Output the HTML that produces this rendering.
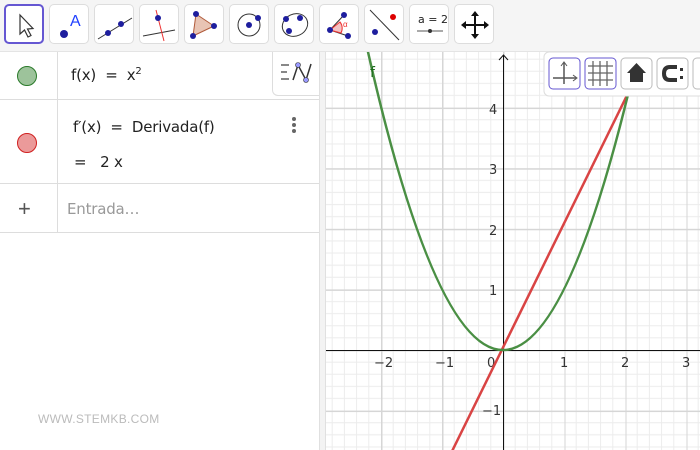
<!DOCTYPE html>
<html><head><meta charset="utf-8"><style>
*{margin:0;padding:0;box-sizing:border-box}
body{width:700px;height:450px;overflow:hidden;background:#fff;font-family:"Liberation Sans","DejaVu Sans",sans-serif;position:relative}
.tb{position:absolute;left:0;top:0;width:700px;height:52px;background:#f5f5f5;border-bottom:1px solid #e4e4e4}
.btn{position:absolute;top:4px;width:40px;height:40px;background:#fff;border:1px solid #ddd;border-radius:5px}
.btn.sel{border:2px solid #6557d2}
.btn svg{position:absolute;left:0;top:0}
.alg{position:absolute;left:0;top:52px;width:319px;height:398px;background:#fff}
.div{position:absolute;left:319px;top:52px;width:7px;height:398px;background:#f3f3f3;border-left:1px solid #e0e0e0;border-right:1px solid #e0e0e0}
.row{position:absolute;left:0;width:319px;border-bottom:1px solid #ddd}
.vl{position:absolute;left:57px;top:52px;width:1px;height:181px;background:#ddd}
.dot{position:absolute;left:17px;width:20px;height:20px;border-radius:50%}
.t{position:absolute;font-size:15px;color:#222;font-family:"DejaVu Sans","Liberation Sans",sans-serif;letter-spacing:-0.2px}
</style></head><body>
<div class="tb">
<div class="btn sel" style="left:4px"><svg width="40" height="40"><path d="M14 9 L14 28 L18.5 24 L22 31 L25 29.5 L21.5 23 L27 22.5 Z" fill="#fff" stroke="#333" stroke-width="1.2"/></svg></div>
<div class="btn" style="left:49px"><svg width="40" height="40"><circle cx="14" cy="29" r="4" fill="#1e1e9e"/><text x="20" y="21" font-size="16" fill="#1f3fff" font-family="Liberation Sans">A</text></svg></div>
<div class="btn" style="left:94px"><svg width="40" height="40"><line x1="3" y1="34" x2="37" y2="13" stroke="#333"/><circle cx="13" cy="28" r="3" fill="#1e1e9e"/><circle cx="26" cy="19" r="3" fill="#1e1e9e"/></svg></div>
<div class="btn" style="left:139px"><svg width="40" height="40"><line x1="3" y1="31" x2="35" y2="25" stroke="#333"/><line x1="16" y1="5" x2="24" y2="36" stroke="#e33"/><circle cx="18" cy="13" r="3" fill="#1e1e9e"/></svg></div>
<div class="btn" style="left:184px"><svg width="40" height="40"><path d="M11 9 L29 21 L8 31 Z" fill="#e8c4b4" stroke="#b05a3a"/><circle cx="11" cy="9" r="3" fill="#1e1e9e"/><circle cx="29" cy="21" r="3" fill="#1e1e9e"/><circle cx="8" cy="31" r="3" fill="#1e1e9e"/></svg></div>
<div class="btn" style="left:229px"><svg width="40" height="40"><circle cx="19" cy="20" r="11" fill="none" stroke="#333"/><circle cx="19" cy="20" r="3" fill="#1e1e9e"/><circle cx="28" cy="13" r="3" fill="#1e1e9e"/></svg></div>
<div class="btn" style="left:274px"><svg width="40" height="40"><ellipse cx="20" cy="20" rx="13" ry="11" transform="rotate(-25 20 20)" fill="none" stroke="#333"/><circle cx="11" cy="14" r="3" fill="#1e1e9e"/><circle cx="25" cy="13" r="3" fill="#1e1e9e"/><circle cx="14" cy="26" r="3" fill="#1e1e9e"/></svg></div>
<div class="btn" style="left:319px"><svg width="40" height="40"><path d="M10 25 L24 10 M10 25 L28 31" stroke="#333"/><path d="M10 25 L20 17 A10 10 0 0 1 21 28 Z" fill="#f4c4c4" stroke="#e33"/><circle cx="24" cy="10" r="3" fill="#1e1e9e"/><circle cx="10" cy="25" r="3" fill="#1e1e9e"/><circle cx="28" cy="31" r="3" fill="#1e1e9e"/><text x="23" y="22" font-size="8" fill="#e33">α</text></svg></div>
<div class="btn" style="left:364px"><svg width="40" height="40"><line x1="5" y1="5" x2="34" y2="35" stroke="#333"/><circle cx="28" cy="12" r="3" fill="#d00"/><circle cx="10" cy="27" r="3" fill="#1e1e9e"/></svg></div>
<div class="btn" style="left:409px"><svg width="40" height="40"><text x="8" y="18" font-size="11" fill="#222" font-family="DejaVu Sans">a = 2</text><line x1="7" y1="26" x2="33" y2="26" stroke="#555"/><circle cx="20" cy="26" r="2" fill="#333"/></svg></div>
<div class="btn" style="left:454px"><svg width="40" height="40"><path d="M20 9 V31 M9 20 H31" stroke="#111" stroke-width="2"/><path d="M20 6 L16 11 H24 Z M20 34 L16 29 H24 Z M6 20 L11 16 V24 Z M34 20 L29 16 V24 Z" fill="#111"/></svg></div>
</div>

<div class="alg">
<div class="row" style="top:0;height:48px"></div>
<div class="row" style="top:48px;height:84px"></div>
<div class="row" style="top:132px;height:49px"></div>
</div>
<div class="vl"></div>
<div class="dot" style="top:66px;background:#9dc39b;border:1px solid #2a7a2a"></div>
<div class="dot" style="top:133px;background:#eb9a9a;border:1px solid #d02020"></div>
<div class="t" style="left:71px;top:66px">f(x) &nbsp;= &nbsp;x<sup style="font-size:10px">2</sup></div>
<div class="t" style="left:73px;top:118px">f′(x) &nbsp;= &nbsp;Derivada(f)</div>
<div class="t" style="left:74px;top:153px">= &nbsp; 2 x</div>
<div style="position:absolute;left:292px;top:117px;width:4px;color:#666">
<div style="width:4px;height:4px;background:#666;border-radius:2px;margin-bottom:2px"></div><div style="width:4px;height:4px;background:#666;border-radius:2px;margin-bottom:2px"></div><div style="width:4px;height:4px;background:#666;border-radius:2px"></div></div>
<div style="position:absolute;left:18px;top:199px;font-size:22px;color:#555;line-height:20px">+</div>
<div class="t" style="left:67px;top:200px;color:#999;font-size:15px">Entrada…</div>
<div style="position:absolute;left:38px;top:412px;font-size:12px;color:#bbb;letter-spacing:0.3px">WWW.STEMKB.COM</div>
<div style="position:absolute;left:272px;top:52px;width:47px;height:44px;background:#fff;border:1px solid #ddd;border-top:none;border-right:none;border-radius:0 0 0 6px">
<svg width="47" height="44"><path d="M8 13 H16 M8 20 H14 M8 27 H16" stroke="#888" stroke-width="2"/><path d="M20 28 L25 13 L33 28 L38 12" fill="none" stroke="#333" stroke-width="1.5"/><circle cx="25" cy="13" r="2.5" fill="#99f" stroke="#333" stroke-width=".6"/><circle cx="33" cy="28" r="2.5" fill="#99f" stroke="#333" stroke-width=".6"/></svg></div>
<div class="div"></div>

<svg style="position:absolute;left:0;top:0" width="700" height="450">
<defs>
<pattern id="g" patternUnits="userSpaceOnUse" x="503" y="350" width="61" height="60.6">
<path d="M12.2 0V60.6M24.4 0V60.6M36.6 0V60.6M48.8 0V60.6M0 12.12H61M0 24.24H61M0 36.36H61M0 48.48H61" stroke="#ececec" stroke-width="1"/>
<path d="M0.5 0V60.6M0 0.5H61" stroke="#d6d6d6" stroke-width="2"/>
</pattern>
<clipPath id="c"><rect x="326" y="52" width="374" height="398"/></clipPath>
</defs>
<g clip-path="url(#c)">
<rect x="326" y="52" width="374" height="398" fill="#fff"/>
<rect x="326" y="52" width="374" height="398" fill="url(#g)"/>
<line x1="326" y1="350.5" x2="700" y2="350.5" stroke="#111"/>
<line x1="503.5" y1="55" x2="503.5" y2="450" stroke="#111"/>
<path d="M499 60 L503.5 55 L508 60" fill="none" stroke="#111"/>
<g font-family="DejaVu Sans" font-size="13" fill="#333">
<text x="374" y="367">−2</text><text x="435" y="367">−1</text><text x="487" y="367">0</text>
<text x="560" y="367">1</text><text x="621" y="367">2</text><text x="682" y="367">3</text>
<text x="489" y="114">4</text><text x="489" y="174">3</text><text x="489" y="235">2</text><text x="489" y="295">1</text><text x="482" y="415">−1</text>
</g>
<path d="M442.2 471.2 L674 -0.2" stroke="#d94444" stroke-width="2.5" fill="none"/>
<path d="M356.6 -0.5 Q503 700.6 649.4 -0.5" stroke="#4a8f44" stroke-width="2.5" fill="none"/>
<text x="370" y="77" font-family="DejaVu Sans" font-size="14" fill="#1a6a1a">f</text>
</g>
<g>
<rect x="544" y="52" width="160" height="44" rx="5" fill="#fff" stroke="#ddd"/>
<rect x="549" y="58" width="31" height="31" rx="4" fill="#fff" stroke="#6557d2"/>
<path d="M564 63 V84 M553 78 H576" stroke="#555" stroke-width="1.5"/><path d="M561 66 L564 62 L567 66 M573 75 L577 78 L573 81" fill="none" stroke="#555"/>
<rect x="585" y="58" width="31" height="31" rx="4" fill="#fff" stroke="#6557d2"/>
<path d="M593 61V86M600 61V86M607 61V86M588 66H613M588 73H613M588 80H613" stroke="#666" stroke-width="1.3"/>
<rect x="621" y="58" width="31" height="31" rx="4" fill="#fff" stroke="#bbb"/>
<path d="M636.5 63 L627 73 H630 V82 H643 V73 H646 Z" fill="#333"/>
<rect x="657" y="58" width="31" height="31" rx="4" fill="#fff" stroke="#bbb"/>
<path d="M677 67 H670 Q664 67 664 73.5 Q664 80 670 80 H677" fill="none" stroke="#333" stroke-width="4"/><rect x="680" y="68" width="3" height="3" fill="#333"/><rect x="680" y="76" width="3" height="3" fill="#333"/>
<rect x="693" y="58" width="31" height="31" rx="4" fill="#fff" stroke="#bbb"/>
</g>
</svg>
</body></html>
